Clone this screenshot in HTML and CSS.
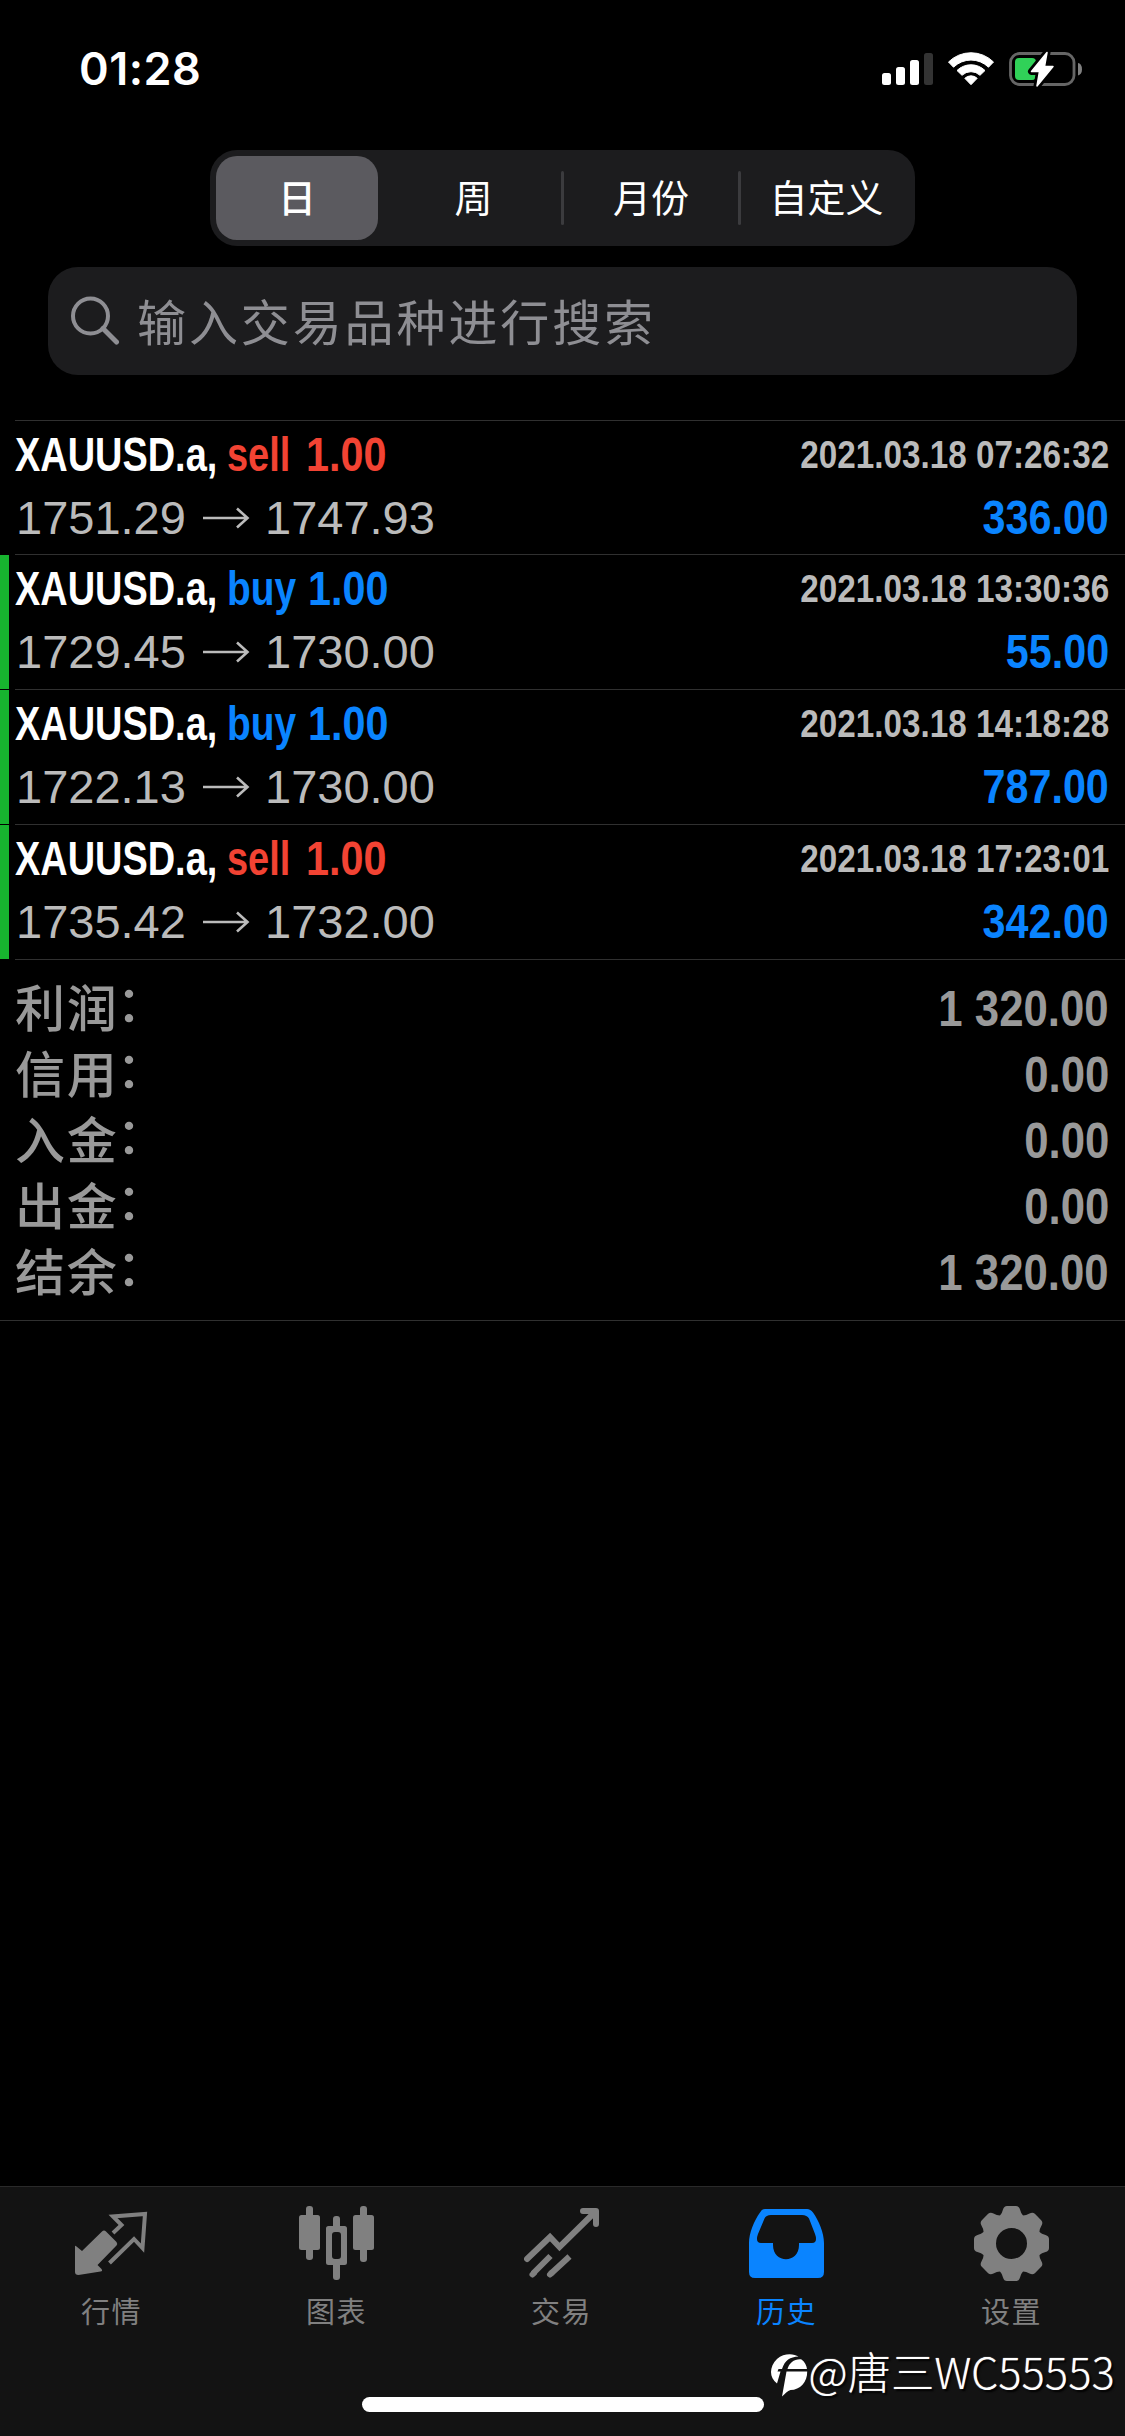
FILE: index.html
```html
<!DOCTYPE html>
<html lang="zh-CN">
<head>
<meta charset="utf-8">
<title>历史</title>
<link rel="stylesheet" href="styles.css">
</head>
<body>
<div class="screen">
  <header class="status">
    <span class="clock">01:28</span>
    <svg class="indicators" viewBox="882 50 202 38" width="202" height="38">
      <g fill="#fff">
        <rect x="882" y="73" width="9" height="12" rx="2.5"/>
        <rect x="896" y="67" width="9" height="18" rx="2.5"/>
        <rect x="910" y="60" width="9" height="25" rx="2.5"/>
        <rect x="924" y="53" width="9" height="32" rx="2.5" fill="#333"/>
        <path d="M948.500 62 A32 32 0 0 1 993.500 62 L988.500 67.200 A25 25 0 0 0 953.500 67.200 Z" stroke="#fff" stroke-linejoin="round"/>
        <path d="M957 70.500 A20 20 0 0 1 985 70.500 L980 75.300 A13 13 0 0 0 962 75.300 Z" stroke="#fff" stroke-linejoin="round"/>
        <path d="M964.800 78.300 A9 9 0 0 1 977.200 78.300 L971 84.700 Z" stroke="#fff" stroke-linejoin="round"/>
      </g>
      <rect x="1010.500" y="53.500" width="63.500" height="31" rx="9" fill="none" stroke="#666" stroke-width="2.800"/>
      <path d="M1078 63 A4 6.200 0 0 1 1078 75.400 Z" fill="#808080"/>
      <rect x="1015" y="58" width="21" height="22" rx="4" fill="#30d158"/>
      <path d="M1047 52.500 L1031.500 71.500 H1039.500 L1037 86 L1053 66.500 H1044.500 Z" fill="#fff" stroke="#000" stroke-width="7" stroke-linejoin="round"/>
      <path d="M1047 52.500 L1031.500 71.500 H1039.500 L1037 86 L1053 66.500 H1044.500 Z" fill="#fff" stroke="#fff" stroke-width="1.500" stroke-linejoin="round"/>
    </svg>
  </header>

  <nav class="segments">
    <span class="segment selected">日</span>
    <span class="segment week">周</span>
    <span class="segment divided month">月份</span>
    <span class="segment divided custom">自定义</span>
  </nav>

  <div class="search">
    <svg class="lens" viewBox="0 0 50 50" width="50" height="50" fill="none" stroke="#8e8e93" stroke-width="4">
      <circle cx="20.500" cy="20" r="17.500"/>
      <path d="M33 32.500 L46.500 46" stroke-width="5" stroke-linecap="round"/>
    </svg>
    <span class="placeholder">输入交易品种进行搜索</span>
  </div>

  <main class="history">
    <section class="deal">
      <i class="mark none"></i>
      <div class="body">
        <div class="line"><span class="symbol">XAUUSD.a,</span><span class="side sell">sell</span><span class="lots sell">1.00</span><span class="date">2021.03.18 07:26:32</span></div>
        <div class="line"><span class="price">1751.29</span><svg class="arrow" viewBox="0 0 48 24" width="48" height="24"><path d="M1 12H45M35 2.500 45.500 12 35 21.500"/></svg><span class="price">1747.93</span><span class="profit">336.00</span></div>
      </div>
    </section>
    <section class="deal">
      <i class="mark"></i>
      <div class="body">
        <div class="line"><span class="symbol">XAUUSD.a,</span><span class="side buy">buy</span><span class="lots buy">1.00</span><span class="date">2021.03.18 13:30:36</span></div>
        <div class="line"><span class="price">1729.45</span><svg class="arrow" viewBox="0 0 48 24" width="48" height="24"><path d="M1 12H45M35 2.500 45.500 12 35 21.500"/></svg><span class="price">1730.00</span><span class="profit">55.00</span></div>
      </div>
    </section>
    <section class="deal">
      <i class="mark"></i>
      <div class="body">
        <div class="line"><span class="symbol">XAUUSD.a,</span><span class="side buy">buy</span><span class="lots buy">1.00</span><span class="date">2021.03.18 14:18:28</span></div>
        <div class="line"><span class="price">1722.13</span><svg class="arrow" viewBox="0 0 48 24" width="48" height="24"><path d="M1 12H45M35 2.500 45.500 12 35 21.500"/></svg><span class="price">1730.00</span><span class="profit">787.00</span></div>
      </div>
    </section>
    <section class="deal">
      <i class="mark"></i>
      <div class="body">
        <div class="line"><span class="symbol">XAUUSD.a,</span><span class="side sell">sell</span><span class="lots sell">1.00</span><span class="date">2021.03.18 17:23:01</span></div>
        <div class="line"><span class="price">1735.42</span><svg class="arrow" viewBox="0 0 48 24" width="48" height="24"><path d="M1 12H45M35 2.500 45.500 12 35 21.500"/></svg><span class="price">1732.00</span><span class="profit">342.00</span></div>
      </div>
    </section>
  </main>

  <section class="summary">
    <div class="total"><span class="label">利润<b>：</b></span><span class="amount">1 320.00</span></div>
    <div class="total"><span class="label">信用<b>：</b></span><span class="amount">0.00</span></div>
    <div class="total"><span class="label">入金<b>：</b></span><span class="amount">0.00</span></div>
    <div class="total"><span class="label">出金<b>：</b></span><span class="amount">0.00</span></div>
    <div class="total"><span class="label">结余<b>：</b></span><span class="amount">1 320.00</span></div>
  </section>

  <footer class="tabbar">
    <div class="tabs">
      <div class="tab">
        <svg viewBox="0 0 75 75" width="75" height="75" fill="currentColor">
          <path d="M1 41Q1 39 2.500 40.500L8 45 28 25.500Q30 23.500 32 25.500L42.500 36Q44 38 42.500 39.500L23.500 59 27.500 63Q29 65 26.500 65.500L4.500 69Q1 69 1 66Z"/>
          <path d="M39 27 47.500 19 39 10.500 71 8 68.500 42 60 33 35.500 57" fill="none" stroke="currentColor" stroke-width="4"/>
        </svg>
        <span>行情</span>
      </div>
      <div class="tab">
        <svg viewBox="0 0 75 75" width="75" height="75" fill="currentColor">
          <rect x="0" y="9" width="21" height="35" rx="2.500"/><rect x="7" y="0" width="7" height="54" rx="3"/>
          <rect x="54" y="9" width="21" height="35" rx="2.500"/><rect x="61" y="0" width="7" height="56" rx="3"/>
          <rect x="34" y="10" width="7" height="14" rx="3"/><rect x="34" y="56" width="7" height="18" rx="3"/>
          <path fill-rule="evenodd" d="M29.500 20H45.500Q48 20 48 22.500V56.500Q48 59 45.500 59H29.500Q27 59 27 56.500V22.500Q27 20 29.500 20ZM36 26Q33 26 33 29V50Q33 53 36 53H39Q42 53 42 50V29Q42 26 39 26Z"/>
        </svg>
        <span>图表</span>
      </div>
      <div class="tab">
        <svg viewBox="0 0 75 75" width="75" height="75" fill="none" stroke="currentColor" stroke-width="6">
          <path d="M3 53 26 31 35.500 41 70 7" stroke-linecap="round"/>
          <path d="M59 5H72V18" stroke-linecap="round" stroke-linejoin="round"/>
          <path d="M26.500 50 9 67.500M45.500 50.500 26.500 68"/>
          <path d="M8.500 68.500 10 67M26 68.500 27.500 67" stroke-linecap="round"/>
        </svg>
        <span>交易</span>
      </div>
      <div class="tab active">
        <svg viewBox="0 0 75 75" width="75" height="75" fill="currentColor">
          <path fill-rule="evenodd" d="M16 3H58Q61.500 3 64 6.500C70 15 75 27 75 37V66Q75 72 69 72H6Q0 72 0 66V37C0 27 5 15 11 6.500Q13 3 16 3ZM22 9Q17 9 15.500 12.500L9 28Q8 30.500 8 33Q8 37 12 37H24V39C24 58 50 58 50 39V37H63Q67 37 67 33Q67 30.500 66 28L60 12.500Q58 9 53 9Z"/>
        </svg>
        <span>历史</span>
      </div>
      <div class="tab">
        <svg viewBox="-37.500 -37.500 75 75" width="75" height="75" fill="currentColor">
          <defs><path id="tooth" d="M-14 -25 -11.500 -28Q-9.500 -30 -8.500 -34 -7.500 -37.500 -4.500 -37.500H4.500Q7.500 -37.500 8.500 -34 9.500 -30 11.500 -28L14 -25Z"/></defs>
          <circle r="22.500" fill="none" stroke="currentColor" stroke-width="14"/>
          <use href="#tooth"/><use href="#tooth" transform="rotate(45)"/><use href="#tooth" transform="rotate(90)"/><use href="#tooth" transform="rotate(135)"/>
          <use href="#tooth" transform="rotate(180)"/><use href="#tooth" transform="rotate(225)"/><use href="#tooth" transform="rotate(270)"/><use href="#tooth" transform="rotate(315)"/>
        </svg>
        <span>设置</span>
      </div>
    </div>
    <div class="home"></div>
    <div class="author">
      <svg viewBox="0 0 38 46" width="38" height="46">
        <g fill="#fff">
          <path d="M28.500 4.500C24 1.500 14 0.500 7 7 -1 15 -1 25.500 7 31.500L10.500 19.500H7.500L8.500 17H12C15 8 20 5 28.500 4.500Z"/>
          <path d="M17.500 17C19 11 25 6.500 31.500 7.500 35 10 36.500 13.500 37 17Z"/>
          <path d="M16.500 19.500H37.200C37.500 30 30 38 20.500 38 17.500 38.500 15 42 12 44.500Z"/>
        </g>
      </svg>
      <span>@唐三WC55553</span>
    </div>
  </footer>
</div>
</body>
</html>
```
FILE: styles.css
```css
* { box-sizing: border-box; }

body {
  margin: 0;
  background: #000;
  color: #fff;
  font-family: "Liberation Sans", "Noto Sans CJK SC", sans-serif;
}

.screen {
  display: flex;
  flex-direction: column;
  width: 1125px;
  height: 2436px;
  overflow: hidden;
  white-space: nowrap;
}

.status {
  display: flex;
  justify-content: space-between;
  height: 150px;
  padding: 50px 41px 0 79px;
}
.clock {
  height: 38px;
  font: 600 45px/38px Inter, sans-serif;
  letter-spacing: 0.500px;
}

.segments {
  display: flex;
  align-self: center;
  width: 705px;
  height: 96px;
  padding: 6px;
  border-radius: 27px;
  background: #1c1c1e;
}
.segment {
  display: flex;
  flex-shrink: 0;
  align-items: center;
  justify-content: center;
  padding-bottom: 4px;
  font: 400 38px/50px "Noto Sans CJK SC", sans-serif;
}
.segment.selected {
  width: 162px;
  margin-right: 8px;
  border-radius: 21px;
  background: #5b5a5f;
  font-weight: 500;
}
.week { width: 175px; }
.month { width: 177px; }
.custom { width: 174px; }
.divided::before {
  content: "";
  width: 3px;
  height: 54px;
  margin: 4px auto 0 0;
  border-radius: 2px;
  background: #3b3b3e;
}
.divided::after {
  content: "";
  margin-left: auto;
}

.search {
  display: flex;
  align-items: center;
  align-self: center;
  width: 1029px;
  height: 108px;
  margin-top: 21px;
  padding-left: 22px;
  border-radius: 30px;
  background: #1c1c1e;
}
.placeholder {
  margin: 0 0 3px 17px;
  color: #8e8e93;
  font: 400 49px/70px "Noto Sans CJK SC", sans-serif;
  letter-spacing: 2.900px;
}

.history { margin-top: 45px; }
.deal {
  display: flex;
  height: 135px;
}
.deal:first-child { height: 134px; }
.mark {
  width: 9px;
  margin: 1px 6px 0 0;
  background: #17b42f;
}
.mark.none { background: none; }
.body {
  display: flex;
  flex: 1;
  flex-direction: column;
  gap: 3px;
  padding: 4px 16px 0 0;
  border-top: 1px solid #303030;
}
.line {
  display: flex;
  align-items: center;
  height: 60px;
  line-height: 60px;
}
.symbol, .side, .lots {
  width: 212px;
  font-size: 48px;
  font-weight: 700;
  transform: scaleX(0.79);
  transform-origin: left;
}
.side { width: 79px; }
.side.buy { width: 81px; transform: scaleX(0.81); }
.lots { width: 90px; transform: scaleX(0.86); }
.sell { color: #f24333; }
.buy { color: #0a84ff; }
.date, .profit {
  margin-left: auto;
  font-weight: 700;
  transform-origin: right;
}
.date {
  color: #bbb;
  font-size: 39px;
  transform: scaleX(0.853);
}
.profit {
  color: #0a84ff;
  font-size: 48px;
  transform: scaleX(0.86);
}
.price {
  width: 174px;
  padding-left: 1px;
  color: #bbb;
  font-size: 47px;
}
.arrow {
  margin: 0 14px 0 13px;
  fill: none;
  stroke: #bbb;
  stroke-width: 2.600px;
}

.summary {
  height: 362px;
  padding: 17px 16px 0 15px;
  border-bottom: 1px solid #303030;
  background: linear-gradient(#303030, #303030) 15px 0 / 100% 1px no-repeat;
}
.total {
  display: flex;
  justify-content: space-between;
  height: 66px;
  color: #999;
  line-height: 66px;
}
.label {
  font: 500 50px/59px "Noto Sans CJK SC", sans-serif;
  letter-spacing: 1.800px;
}
.label b {
  display: inline-block;
  font-weight: 500;
  transform: translate(-2px, -5px);
}
.amount {
  font-size: 50px;
  font-weight: 700;
  transform: scaleX(0.875);
  transform-origin: right;
}

.tabbar {
  display: flex;
  flex-direction: column;
  height: 250px;
  margin-top: auto;
  border-top: 1px solid #2a2a2a;
  background: #131313;
}
.tabs { display: flex; }
.tab {
  display: flex;
  flex: 1;
  flex-direction: column;
  align-items: center;
  padding: 19px 2px 0 0;
  color: #808080;
}
.tab.active { color: #0a84ff; }
.tab span {
  margin-top: 8px;
  font: 400 29px/42px "Noto Sans CJK SC", sans-serif;
  letter-spacing: 1.500px;
}
.home {
  width: 402px;
  height: 15px;
  margin: 66px 0 0 362px;
  border-radius: 8px;
  background: #fff;
}
.author {
  display: flex;
  align-items: center;
  justify-content: flex-end;
  height: 48px;
  margin-top: -61px;
  padding-right: 10px;
  font: 300 43px/48px "Noto Sans CJK SC", sans-serif;
  letter-spacing: 0.300px;
  text-shadow: 2px 2px 2px #000, 0 0 1px #fff;
}
.author span { padding-bottom: 11px; }
```
